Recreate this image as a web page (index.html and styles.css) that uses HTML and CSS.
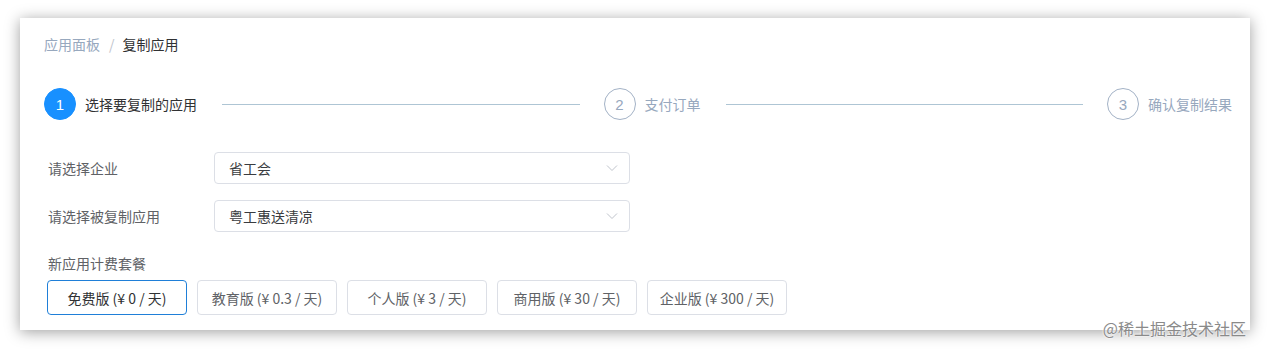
FILE: index.html
```html
<!DOCTYPE html>
<html lang="zh-CN">
<head>
	<meta charset="UTF-8">
	<title>复制应用</title>
	<link rel="stylesheet" href="styles.css">
</head>
<body>
	<main class="card">
		<nav class="crumbs">
			<span class="crumb-link">应用面板</span>
			<span class="crumb-sep">/</span>
			<span class="crumb-current">复制应用</span>
		</nav>

		<section class="steps">
			<div class="step active">
				<span class="step-num">1</span>
				<span class="step-title">选择要复制的应用</span>
			</div>
			<div class="step-line"></div>
			<div class="step">
				<span class="step-num">2</span>
				<span class="step-title">支付订单</span>
			</div>
			<div class="step-line"></div>
			<div class="step">
				<span class="step-num">3</span>
				<span class="step-title">确认复制结果</span>
			</div>
		</section>

		<form class="form">
			<div class="row">
				<label class="label">请选择企业</label>
				<div class="select">
					<span>省工会</span>
					<svg class="arrow" width="12" height="8" viewBox="0 0 12 8"><path d="M1 1.5 L6 6.5 L11 1.5" fill="none" stroke="#c0c4cc" stroke-width="1"/></svg>
				</div>
			</div>
			<div class="row">
				<label class="label">请选择被复制应用</label>
				<div class="select">
					<span>粤工惠送清凉</span>
					<svg class="arrow" width="12" height="8" viewBox="0 0 12 8"><path d="M1 1.5 L6 6.5 L11 1.5" fill="none" stroke="#c0c4cc" stroke-width="1"/></svg>
				</div>
			</div>
			<div class="plans">
				<div class="plans-title">新应用计费套餐</div>
				<div class="plan-list">
					<button type="button" class="plan selected">免费版 (¥ 0 / 天)</button>
					<button type="button" class="plan">教育版 (¥ 0.3 / 天)</button>
					<button type="button" class="plan">个人版 (¥ 3 / 天)</button>
					<button type="button" class="plan">商用版 (¥ 30 / 天)</button>
					<button type="button" class="plan">企业版 (¥ 300 / 天)</button>
				</div>
			</div>
		</form>
	</main>
	<div class="watermark">@稀土掘金技术社区</div>
</body>
</html>
```

FILE: styles.css
```css
html, body {
	margin: 0;
	background: #fff;
}
body {
	font-family: "Noto Sans CJK SC", "Noto Sans", sans-serif;
	font-size: 14px;
	color: #303133;
	position: relative;
	height: 352px;
	overflow: hidden;
	padding: 18px 20px 0;
	box-sizing: border-box;
}

/* card */
main.card {
	background: #fff;
	width: 1230px;
	height: 312px;
	box-sizing: border-box;
	padding: 17px 18px 0 24px;
	box-shadow: 0 2px 14px rgba(0,0,0,.38);
}

nav.crumbs {
	display: flex;
	align-items: center;
	height: 18px;
	line-height: 18px;
}
nav.crumbs .crumb-link { color: #97a8be; }
nav.crumbs .crumb-sep { color: #c0c4cc; margin: 0 8px 0 9px; }
nav.crumbs .crumb-current { color: #303133; }

/* steps */
section.steps {
	display: flex;
	align-items: center;
	margin-top: 35px;
	height: 32px;
}
.step {
	display: flex;
	align-items: center;
	gap: 9px;
}
.step .step-num {
	width: 30px;
	height: 30px;
	border: 1px solid #a3b2c6;
	border-radius: 50%;
	display: flex;
	align-items: center;
	justify-content: center;
	font-size: 15px;
	color: #97a8be;
	font-family: "Liberation Sans", sans-serif;
}
.step .step-title {
	color: #97a8be;
	font-size: 14px;
}
.step.active .step-num {
	background: #1890ff;
	border-color: #1890ff;
	color: #fff;
}
.step.active .step-title { color: #303133; }
.step-line {
	flex: 1;
	height: 1px;
	background: #aec5d4;
	margin: 0 24px 0 25px;
}

/* form */
form.form {
	margin-top: 32px;
	padding-left: 4px;
}
.row {
	display: flex;
	align-items: center;
	height: 32px;
	margin-bottom: 16px;
}
.row .label {
	width: 166px;
	color: #606266;
}
.select {
	width: 416px;
	height: 32px;
	box-sizing: border-box;
	border: 1px solid #dcdfe6;
	border-radius: 4px;
	display: flex;
	align-items: center;
	justify-content: space-between;
	padding: 0 11px 0 14px;
	color: #3a3c40;
}
.select .arrow { display: block; }

.plans {
	margin-top: 22px;
}
.plans-title {
	color: #606266;
	line-height: 18px;
}
.plan-list {
	display: flex;
	gap: 10px;
	margin-top: 8px;
	margin-left: -1px;
}
.plan {
	width: 140px;
	height: 35px;
	background: #fff;
	border: 1px solid #dcdfe6;
	border-radius: 4px;
	font-family: "Noto Sans CJK SC", "Noto Sans", sans-serif;
	font-size: 14px;
	color: #606266;
	padding: 0;
	cursor: pointer;
}
.plan.selected {
	border-color: #1f7fd8;
	color: #303133;
}

.watermark {
	position: absolute;
	right: 24px;
	bottom: 12px;
	font-size: 16px;
	color: #8a8a8a;
	text-shadow: 0 0 2px #fff, 0 0 2px #fff;
}
```
